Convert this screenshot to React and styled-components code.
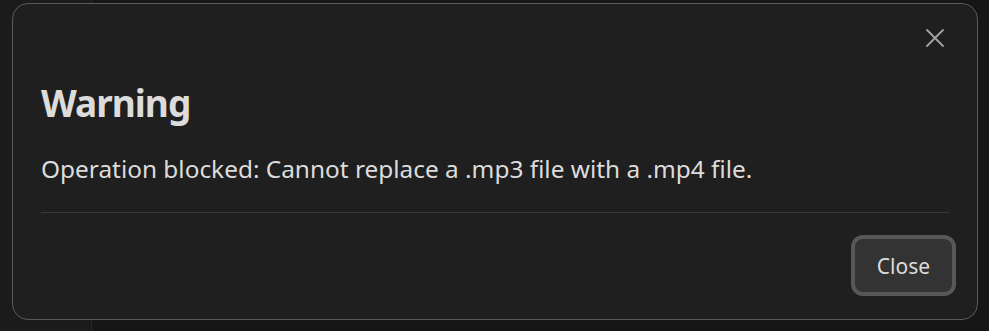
import React from 'react'
import styled, { createGlobalStyle } from 'styled-components'

const Global = createGlobalStyle`
  html, body { margin: 0; padding: 0; background: #161616; }
  body { font-family: "Segoe UI", "Noto Sans", "Open Sans", sans-serif; }
`

const Page = styled.div`
  display: flex;
  width: 989px;
  height: 331px;
  overflow: hidden;
`

const Sidebar = styled.div`
  width: 91px;
  background: #1b1b1b;
  border-right: 1px solid #262626;
`

const Main = styled.div`
  flex: 1;
  background: #161616;
`

const Dialog = styled.div`
  position: fixed;
  left: 12px;
  top: 3px;
  width: 966px;
  height: 317px;
  box-sizing: border-box;
  background: #1f1f1f;
  border: 1px solid #5a5a5a;
  border-radius: 16px;
  padding: 0 28px;
  display: flex;
  flex-direction: column;
`

const TopBar = styled.div`
  display: flex;
  justify-content: flex-end;
  padding-top: 20px;
  height: 28px;
`

const IconButton = styled.button`
  background: none;
  border: none;
  padding: 0;
  width: 28px;
  height: 28px;
  display: flex;
  align-items: center;
  justify-content: center;
  color: #a3a3a3;
  cursor: pointer;
`

const Title = styled.h2`
  margin: 29px 0 0 0;
  font-size: 37px;
  line-height: 44px;
  letter-spacing: -1px;
  font-weight: 700;
  color: #dcdcdc;
`

const Message = styled.p`
  margin: 29px 0 0 0;
  font-size: 24.4px;
  line-height: 30px;
  color: #dcdcdc;
`

const Divider = styled.hr`
  margin: 28px 0 0 0;
  border: none;
  border-top: 1px solid #383838;
`

const Footer = styled.div`
  display: flex;
  justify-content: flex-end;
  margin-top: 22px;
  margin-right: -7px;
`

const Button = styled.button`
  width: 105px;
  height: 61px;
  box-sizing: border-box;
  background: #333333;
  border: 4px solid #585858;
  border-radius: 12px;
  color: #dcdcdc;
  font-family: inherit;
  font-size: 21px;
  cursor: pointer;
`

export default function App() {
  return (
    <>
      <Global />
      <Page>
        <Sidebar />
        <Main />
      </Page>
      <Dialog>
        <TopBar>
          <IconButton aria-label="Close">
            <svg width="20" height="20" viewBox="0 0 20 20" fill="none" stroke="currentColor" strokeWidth="1.8" strokeLinecap="round">
              <path d="M2 2 L18 18 M18 2 L2 18" />
            </svg>
          </IconButton>
        </TopBar>
        <Title>Warning</Title>
        <Message>Operation blocked: Cannot replace a .mp3 file with a .mp4 file.</Message>
        <Divider />
        <Footer>
          <Button>Close</Button>
        </Footer>
      </Dialog>
    </>
  )
}
